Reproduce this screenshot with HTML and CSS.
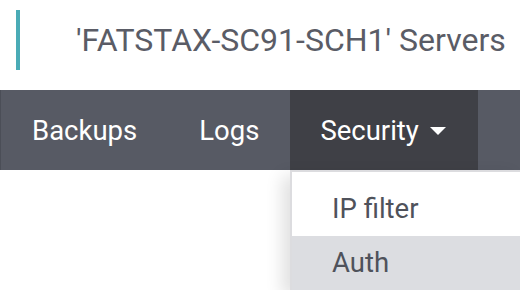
FILE: index.html
```html
<!DOCTYPE html>
<html lang="en">
<head>
    <meta charset="UTF-8">
    <title>Servers</title>
    <link rel="stylesheet" href="styles.css">
</head>
<body>

    <!-- Page title -->
    <div class="page-title">
        <h1>'FATSTAX-SC91-SCH1' Servers</h1>
    </div>

    <!-- Tabs -->
    <div class="tabs">
        <a href="#" class="tab">Backups</a>
        <a href="#" class="tab">Logs</a>
        <a href="#" class="tab active">Security <span class="caret"></span></a>
    </div>

    <!-- Security dropdown, opened -->
    <div class="menu-row">
        <ul class="sub-menu">
            <li><a href="#" class="sub-item">IP filter</a></li>
            <li><a href="#" class="sub-item selected">Auth</a></li>
        </ul>
    </div>

</body>
</html>
```

FILE: styles.css
```css
body {
    font-family: Roboto, 'Noto Sans', sans-serif;
    margin: 0;
    background-color: #ffffff;
}

/* Title */
.page-title {
    margin: 10px 0 20px 16px;
    height: 60px;
    border-left: 4px solid #4aabb6;
    display: flex;
    align-items: center;
    padding-left: 56px;
}

.page-title h1 {
    margin: 0;
    font-size: 32px;
    font-weight: 400;
    color: #5a5c66;
    white-space: nowrap;
}

/* Tabs */
.tabs {
    display: flex;
    height: 80px;
    background-color: #575a64;
    border-left: 1px solid #4b4e57;
}

.tab {
    display: flex;
    align-items: center;
    padding: 0 31px;
    color: #ffffff;
    font-size: 27.5px;
    text-decoration: none;
}

.tab.active {
    background-color: #3f4046;
    padding-left: 30px;
    padding-right: 32px;
}

.caret {
    display: inline-block;
    margin-left: 11px;
    margin-top: 2px;
    border-left: 8px solid transparent;
    border-right: 8px solid transparent;
    border-top: 8px solid #ffffff;
}

/* Dropdown menu */
.menu-row {
    display: flex;
    padding-left: 290px;
}

.sub-menu {
    flex: 1;
    margin: 0;
    padding: 10px 0 0;
    list-style: none;
    background-color: #ffffff;
    border-left: 2px solid #dcdcdf;
    border-top: 2px solid #dcdcdf;
    box-shadow: -8px 6px 16px rgba(0, 0, 0, 0.12);
}

.sub-item {
    display: block;
    height: 54px;
    line-height: 54px;
    padding-left: 40px;
    color: #4f525b;
    font-size: 27.5px;
    text-decoration: none;
}

.sub-item.selected {
    background-color: #dcdde1;
}
```
